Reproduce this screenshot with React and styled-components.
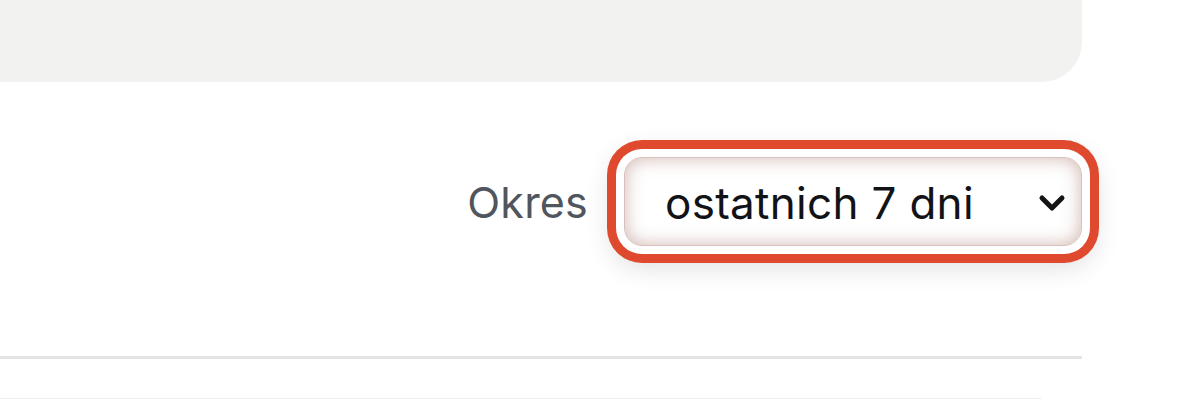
import React from 'react';
import styled, { createGlobalStyle } from 'styled-components';

const GlobalStyle = createGlobalStyle`
  * {
    margin: 0;
    padding: 0;
    box-sizing: border-box;
  }

  body {
    background: #ffffff;
    font-family: 'Inter', 'Liberation Sans', sans-serif;
    color: #1c1d21;
    overflow: hidden;
  }
`;

const Page = styled.div`
  width: 1082px;
  height: 400px;
`;

const TopPanel = styled.div`
  height: 82px;
  background: #f2f2f0;
  border-bottom-right-radius: 40px;
`;

const FilterRow = styled.div`
  display: flex;
  justify-content: flex-end;
  align-items: center;
  gap: 36px;
  margin-top: 75px;
`;

const Label = styled.span`
  font-size: 43px;
  color: #51565e;
  letter-spacing: 0.2px;
`;

const SelectBox = styled.div`
  width: 458px;
  height: 89px;
  display: flex;
  align-items: center;
  justify-content: space-between;
  padding: 2px 14px 0 40px;
  border-radius: 18px;
  border: 1.5px solid #d8c0bb;
  background: #ffffff;
  box-shadow:
    inset 0 0 18px rgba(170, 120, 110, 0.55),
    0 0 0 8px #ffffff,
    0 0 0 17px #df4a2f,
    0 8px 26px 14px rgba(0, 0, 0, 0.12);
  cursor: pointer;
`;

const Value = styled.span`
  font-size: 44px;
  letter-spacing: 0.3px;
  color: #121317;
`;

const Divider = styled.hr`
  border: none;
  height: 3px;
  background: #e3e3e3;
  margin-top: ${({ $top }) => $top}px;
  width: ${({ $width }) => $width}px;
`;

const FaintDivider = styled(Divider)`
  height: 1px;
  background: #f0f0f0;
`;

const Chevron = () => (
  <svg width="30" height="22" viewBox="0 0 30 22" fill="none">
    <polyline
      points="5,6 15,16 25,6"
      stroke="#141414"
      strokeWidth="5"
      strokeLinecap="round"
      strokeLinejoin="round"
    />
  </svg>
);

const App = () => (
  <>
    <GlobalStyle />
    <Page>
      <TopPanel />
      <FilterRow>
        <Label>Okres</Label>
        <SelectBox>
          <Value>ostatnich 7 dni</Value>
          <Chevron />
        </SelectBox>
      </FilterRow>
      <Divider $top={110} $width={1082} />
      <FaintDivider $top={39} $width={1042} />
    </Page>
  </>
);

export default App;
